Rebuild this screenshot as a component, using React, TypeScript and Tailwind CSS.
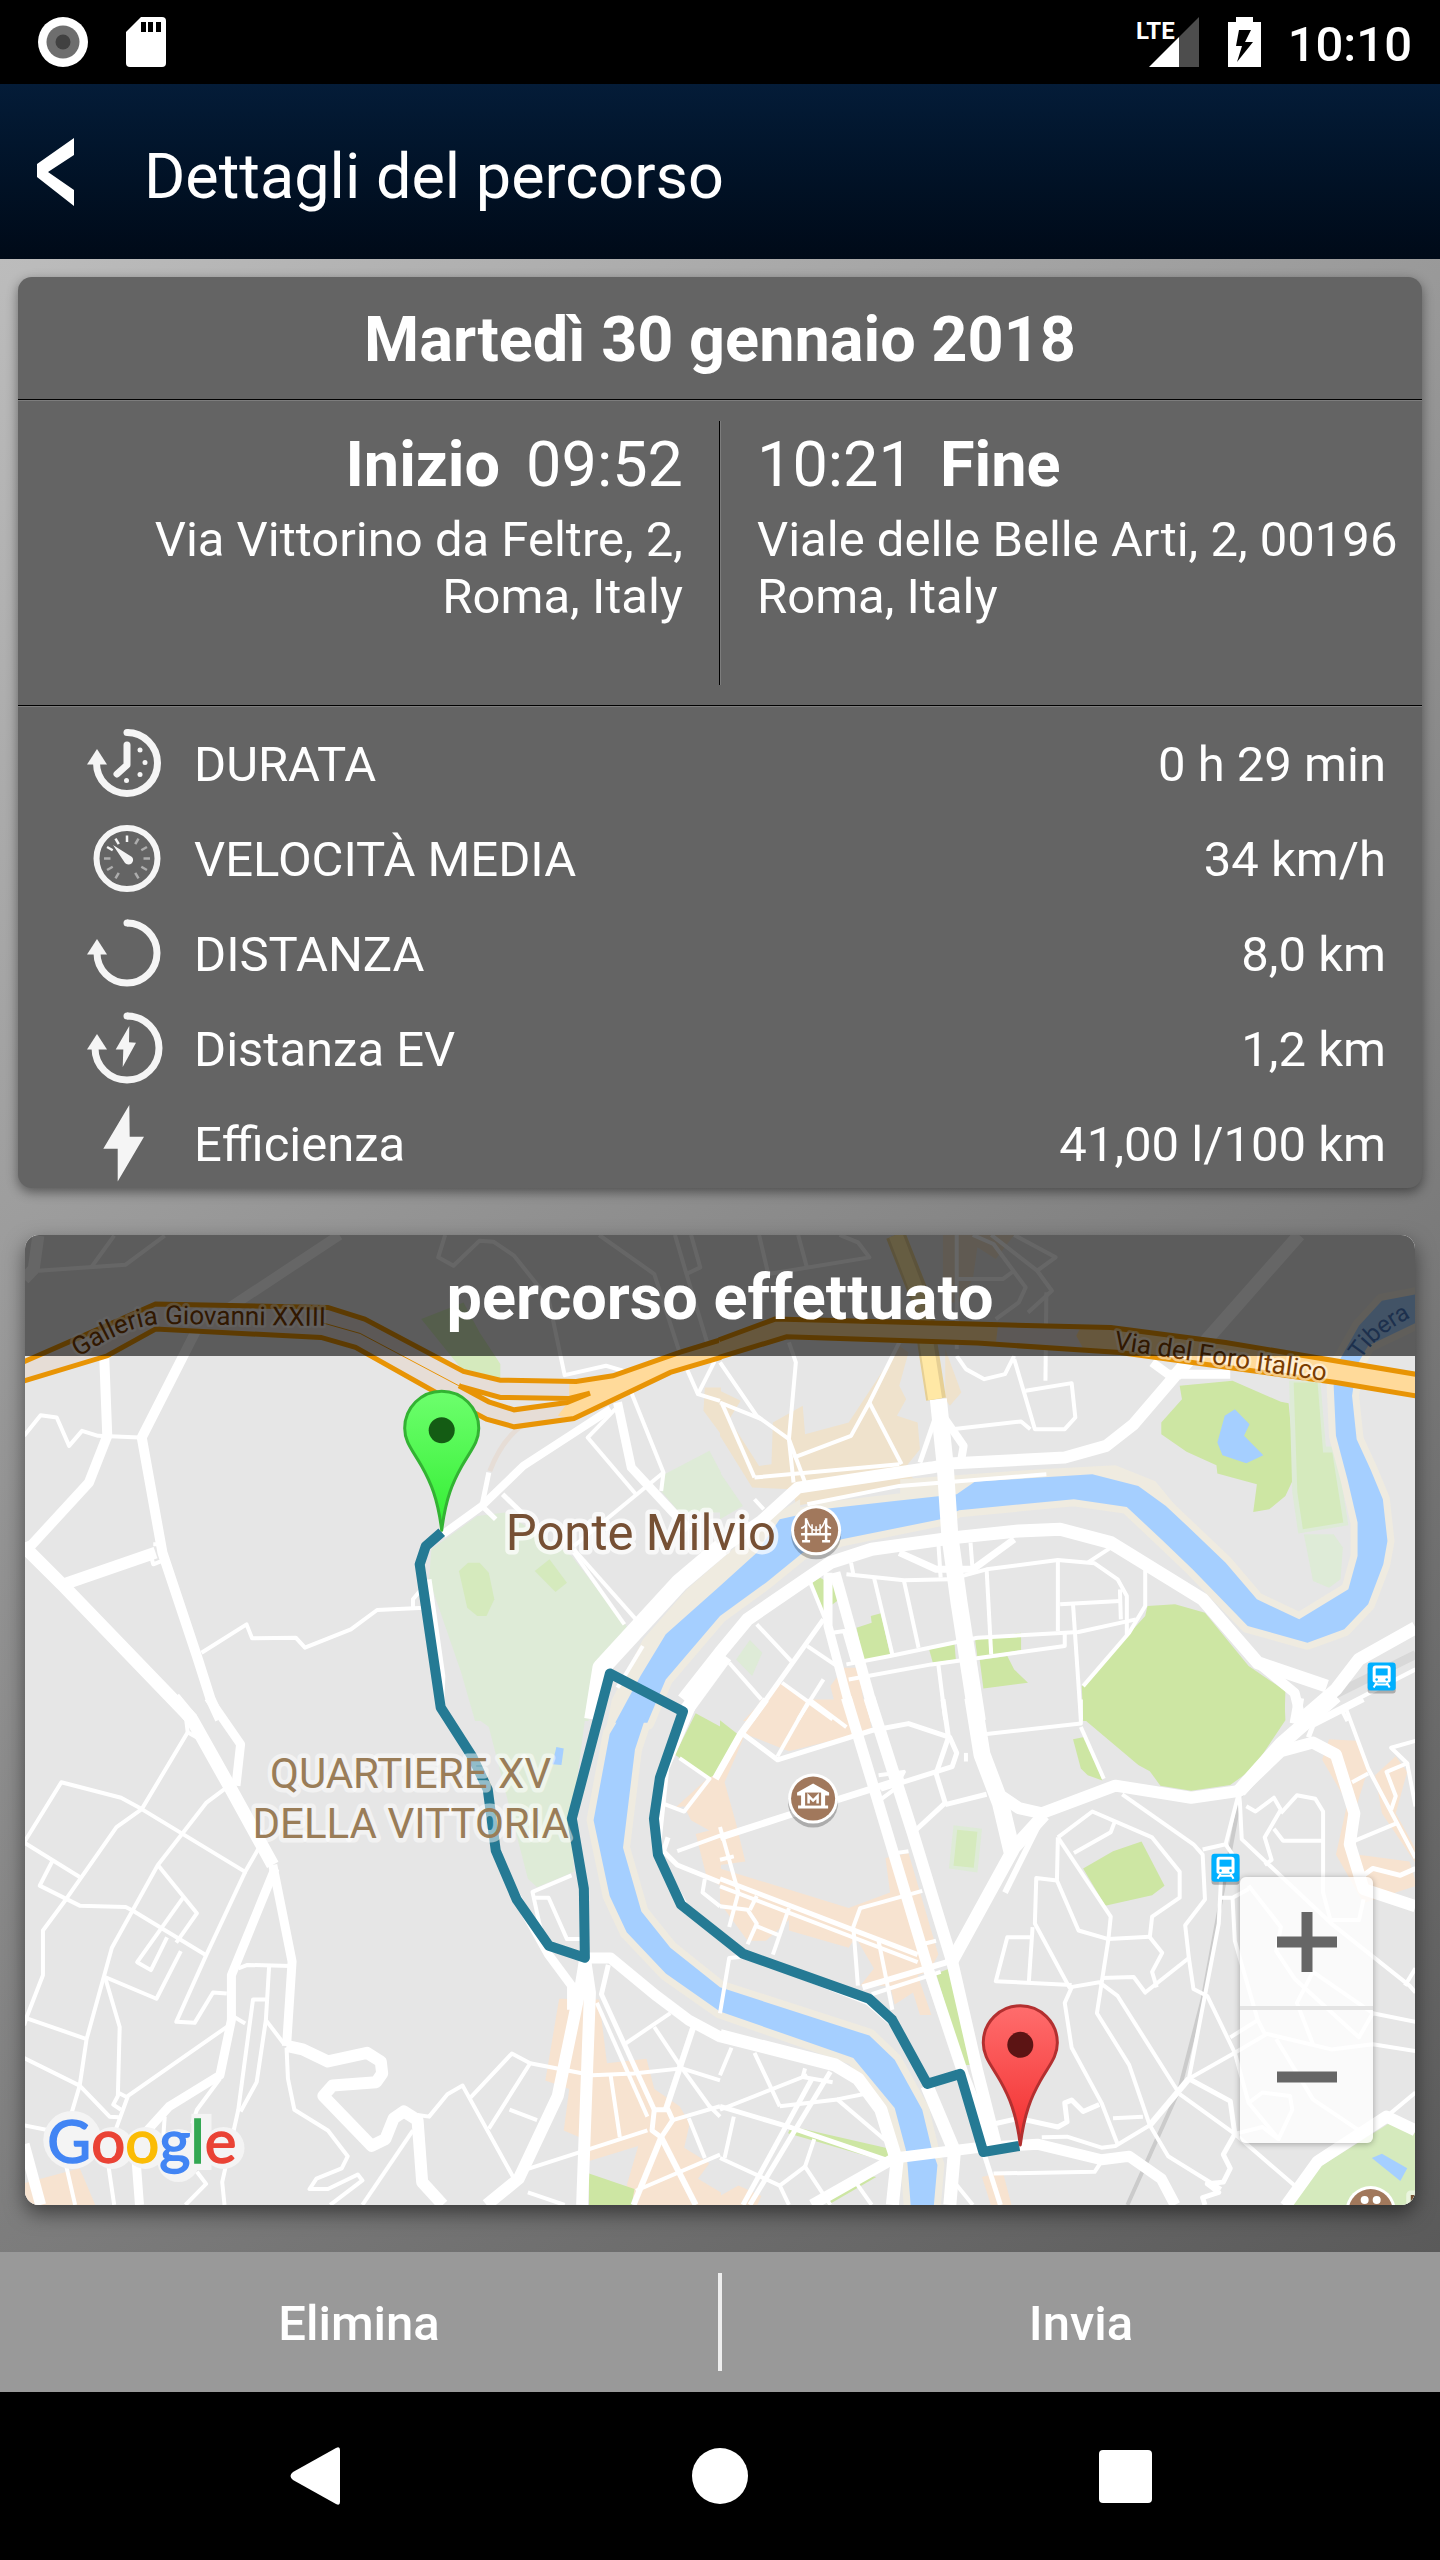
import type { ReactNode } from 'react';

type Street = [points: string, width?: number];
type Area = [points: string, color: string];

interface Tile {
  id: string;
  transform: string;
  areas: Area[];
  streets: Street[];
}

const PARK = '#cde6a3';
const MEADOW = '#d5eabd';
const GROVE = '#deebd7';
const PEACH = '#f7e3d0';
const TAN = '#efe2cc';
const WATER = '#a5cfff';
const BANK = '#efebe0';

const tiles: Tile[] = [
  {
    id: 'nw',
    transform: 'translate(0 1220) scale(.4592 .3333)',
    areas: [
      ['1040,890 940,990 935,1080 1005,1360 1035,1505 1282,1505 1285,1400 1370,1230 1245,1010 1100,880', GROVE],
      ['1440,770 1545,695 1570,760 1570,880 1480,880 1440,815', GROVE],
      ['918,300 1010,250 1045,340 1090,435 1090,485 1010,457', MEADOW],
      ['1000,1055 1020,1030 1045,1030 1065,1060 1077,1140 1060,1190 1040,1190 1018,1165', MEADOW],
      ['1197,1020 1235,1090 1210,1118 1165,1055', MEADOW],
      ['1535,505 1570,505 1570,645 1532,575', TAN],
    ],
    streets: [
      ['54,970 60,990 140,1100 420,1500', 13],
      ['228,400 235,650 195,790 65,985', 10],
      ['740,48 430,330 310,655 355,1000 430,1310 460,1440 480,1500', 10],
      ['140,1095 340,1000', 12],
      ['335,975 355,975 362,1020 335,1035 328,1000'],
      ['54,180 75,150 85,50', 12],
      ['54,650 90,588 125,595 152,680 180,635 215,650 305,655'],
      ['440,1300 538,1215 550,1257 645,1255 665,1285 765,1230 822,1172 925,1165'],
      ['915,1115 900,1140 900,1165'],
      ['85,155 275,137 360,50'],
      ['200,145 250,50'],
      ['970,48 955,115 988,140 1045,65 1075,68 1120,110 1195,240 1230,468 1320,440 1395,470'],
      ['1305,48 1425,165 1480,400 1520,525 1568,545'],
      ['1470,48 1495,165 1525,145 1505,48'],
      ['1495,165 1540,370 1555,430 1520,525'],
      ['965,945 1050,860 1140,740 1330,570', 8],
      ['1065,760 1050,860 1080,900', 5],
      ['1095,825 1140,885', 5],
      ['1250,1000 1360,1215'],
      ['1250,990 1385,1200'],
      ['1340,570 1280,655 1385,825'],
      ['1345,550 1375,745 1500,930', 9],
      ['1375,520 1445,760 1440,815'],
      ['1445,760 1250,980'],
      ['935,1080 965,1370 962,1480', 5],
      ['1400,1280 1345,1405'],
      ['1570,985 1480,1090 1310,1345 1292,1500', 18],
      ['1580,1310 1490,1480', 14],
    ],
  },
  {
    id: 'ne',
    transform: 'translate(720 1220) scale(.4592 .3333)',
    areas: [
      ['930,1160 990,1155 1055,1180 1150,1340 1230,1415 1228,1505 790,1505 787,1400 925,1190', PARK],
      ['1000,500 1115,485 1220,548 1237,552 1247,700 1247,780 1230,830 1195,870 1160,878 1168,795 1082,763 1080,738 1015,698 960,645 960,610 1005,540', PARK],
      ['1120,570 1152,615 1140,650 1182,708 1145,732 1093,708 1082,670 1098,590', WATER],
      ['1238,485 1306,485 1318,682 1340,682 1367,918 1258,943 1245,820', GROVE],
      ['1248,490 1300,490 1312,700 1332,700 1356,910 1268,930 1256,820', MEADOW],
      ['1270,945 1335,945 1355,985 1350,1080 1325,1105 1290,1085', GROVE],
      ['200,1090 218,1075 260,1110 260,1140 225,1175', PARK],
      ['297,1225 330,1210 328,1190 350,1182 370,1305 312,1325', PARK],
      ['455,1290 510,1270 513,1320 463,1330', PARK],
      ['555,1262 655,1240 655,1292 560,1315', PARK],
      ['565,1322 625,1310 640,1350 670,1390 573,1407', PARK],
      ['35,1320 65,1262 92,1300 70,1370', GROVE],
      ['0,760 50,860 0,900', GROVE],
      ['50,1505 130,1390 245,1505', PEACH],
      ['240,1400 270,1345 300,1345 320,1505 260,1505', PEACH],
      ['0,515 45,545 20,600 85,740 112,735 115,610 180,560 185,645 280,610 390,380 410,400 390,500 405,540 385,590 430,610 435,690 400,750 430,790 165,860 160,810 70,805 0,650', TAN],
      ['490,390 525,520 500,560 490,540', TAN],
      ['485,48 640,48 600,120 560,85 550,180 520,250 485,250', TAN],
    ],
    streets: [
      ['390,370 325,550 285,650 160,715'],
      ['325,550 395,735'],
      ['75,775 390,735'],
      ['5,555 75,775'],
      ['0,430 80,590 150,660 160,790'],
      ['150,370 165,430 150,660'],
      ['0,550 90,600'],
      ['150,660 185,790'],
      ['190,855 390,800 710,765'],
      ['515,410 535,450 575,480 620,465 640,410'],
      ['640,420 685,630 750,630 773,595 765,492 665,515'],
      ['505,630 655,607 675,630'],
      ['515,48 515,390'],
      ['550,48 595,75 665,205 650,250 600,300'],
      ['640,48 730,115 690,155'],
      ['590,48 690,155 722,215 670,280'],
      ['710,220 708,485'],
      ['85,48 105,165 325,115 300,70 260,48'],
      ['170,48 190,150'],
      ['515,180 615,180 640,155'],
      ['275,1065 400,1083 500,1080 580,1050 735,1022 815,1032 865,1080 885,1130 885,1250'],
      ['870,1110 872,1200'],
      ['735,1022 735,1235'],
      ['740,1155 870,1145'],
      ['768,1155 785,1500'],
      ['925,1050 925,1160 890,1240 790,1400'],
      ['580,1050 590,1305'],
      ['275,1335 370,1310 560,1255 780,1238 905,1200'],
      ['280,1380 460,1335 750,1280 750,1238'],
      ['335,1075 375,1305'],
      ['400,1083 432,1285'],
      ['475,1335 490,1500'],
      ['285,1030 290,1065'],
      ['390,1000 470,1050 550,1050 640,960', 7],
      ['545,970 550,1060'],
      ['475,970 480,1075'],
      ['850,985 800,1030'],
      ['195,1085 235,1220'],
      ['80,1215 155,1325'],
      ['225,1200 70,1500', 5],
      ['190,1280 265,1350'],
      ['135,1390 245,1500'],
      ['20,1330 90,1440'],
      ['225,1380 170,1500'],
      ['245,1240 270,1235 290,1330'],
      ['470,590 435,730', 5],
      ['490,600 530,680 525,720', 8],
      ['475,540 490,740 500,950 520,1150 560,1505', 17],
      ['235,1060 235,1220 290,1505', 9],
      ['250,1060 340,1505', 11],
      ['75,840 95,870'],
      ['-10,1000 90,905 170,805 460,745 510,732 750,715 840,680 900,615 990,470', 12],
      ['940,430 975,465 1110,465', 9],
      ['990,470 1060,360 1260,48', 13],
      ['-80,1440 0,1300 60,1200 240,1030 330,990 510,955 650,935 740,930 850,970 1050,1140 1170,1330 1320,1400', 13],
      ['1170,1330 1250,1420 1265,1505', 10],
      ['1513,1225 1390,1320 1340,1410 1260,1505', 13],
      ['1513,1350 1350,1465 1300,1500'],
      ['1350,1465 1365,1505'],
    ],
  },
  {
    id: 'sw',
    transform: 'translate(0 1700) scale(.4592 .3444)',
    areas: [
      ['1280,0 1245,350 1250,500 1170,545 1150,520 1065,80 1035,50 1023,0', GROVE],
      ['1218,868 1305,870 1322,1055 1408,1042 1425,1130 1480,1180 1502,1230 1490,1300 1545,1345 1520,1390 1570,1430 1570,1470 1390,1470 1365,1410 1390,1295 1280,1340 1280,1280 1228,1250 1240,1130 1188,1105', PEACH],
      ['50,1405 175,1360 210,1470 50,1470', PEACH],
      ['1283,1375 1382,1420 1375,1470 1283,1470', PARK],
      ['1470,160 1515,40 1570,80 1570,220 1545,228', PARK],
      ['1470,315 1540,230 1570,210 1570,540 1540,520 1515,390 1545,380 1505,350 1490,310', PEACH],
      ['1212,138 1228,142 1223,190 1203,188', WATER],
    ],
    streets: [
      ['54,415 135,240 265,285 310,318 535,500 565,430'],
      ['410,95 310,318 255,370 145,580 95,670 95,800 60,920 54,945'],
      ['405,40 410,95 430,110'],
      ['54,415 175,515'],
      ['115,470 88,540 175,598 275,602 290,612 450,742'],
      ['495,255 450,300 345,480 290,612 245,720 190,985 175,1120 155,1210'],
      ['345,480 430,620 385,705'],
      ['400,575 300,762 330,785 365,690'],
      ['535,500 450,742 385,935 425,938 465,850 495,853'],
      ['230,805 342,868 395,730'],
      ['230,805 262,950 258,1150 248,1175 265,1190'],
      ['60,925 190,985'],
      ['54,1040 175,1120 240,1210 260,1212'],
      ['500,945 280,1150 250,1260 235,1330 250,1466'],
      ['258,1140 280,1155'],
      ['520,780 540,770 635,773'],
      ['587,775 580,930 620,1000'],
      ['580,870 552,870 520,1190 485,1400 490,1466'],
      ['510,920 535,940'],
      ['580,930 560,1110 525,1195'],
      ['625,1010 628,1100 642,1190 715,1250 758,1325 745,1360 690,1390 675,1420 715,1420 780,1378 790,1395 720,1466'],
      ['900,1250 790,1466'],
      ['910,1205 935,1210 975,1145 1008,1120 1120,1390'],
      ['1025,1155 1115,1027 1155,1055 1065,1245'],
      ['1110,1190 1170,1220'],
      ['1155,1055 1290,1090 1380,1085 1485,1070 1568,1105'],
      ['1330,1090 1350,1270'],
      ['1245,510 1160,558 1175,650 1195,740'],
      ['1165,575 1195,575 1235,695 1265,695'],
      ['1325,770 1310,855 1425,1190', 5],
      ['1300,880 1410,1210'],
      ['1460,910 1360,1000'],
      ['1425,950 1480,1060 1545,1180 1568,1210'],
      ['1510,950 1450,1190', 6],
      ['1425,1190 1455,1190 1465,1220 1440,1270 1420,1250 1425,1190', 5],
      ['1440,1270 1380,1466', 6],
      ['1440,1270 1515,1466', 6],
      ['1410,1250 1130,1370'],
      ['1465,1220 1568,1180'],
      ['1385,1425 1568,1320'],
      ['1500,1215 1535,1330'],
      ['480,1100 430,1190 420,1230'],
      ['360,1210 355,1300'],
      ['54,1235 110,1250'],
      ['140,1320 165,1466'],
      ['1150,1430 1230,1466'],
      ['430,1370 450,1405 405,1466'],
      ['1455,400 1445,440 1475,480 1568,530', 5],
      ['1440,300 1490,325 1545,230 1480,170'],
      ['1475,440 1568,395'],
      ['1535,520 1530,560 1568,600'],
      ['54,1290 90,1466', 11],
      ['380,-5 420,60 500,250 595,480', 13],
      ['455,-5 525,130 515,250', 9],
      ['595,480 637,760 625,1005', 9],
      ['600,490 505,800 505,930 480,1090 370,1180 295,1290 305,1466', 9],
      ['625,1005 660,1015 715,1050 800,1025 830,1050 833,1085 820,1110 725,1120 705,1150 810,1295 840,1275 858,1215 880,1195 910,1220 920,1400 965,1466', 12],
      ['1120,560 1195,740 1245,830 1245,900', 9],
      ['1275,750 1265,830 1215,1150 1130,1390 1060,1466', 12],
      ['1275,760 1285,850 1268,1466', 12],
      ['1275,750 1330,750 1430,860 1500,930 1570,980', 11],
      ['1515,0 1450,200 1430,450 1500,620', 7],
    ],
  },
  {
    id: 'se',
    transform: 'translate(720 1700) scale(.4592 .3444)',
    areas: [
      ['790,0 1228,0 1230,60 1160,200 1110,248 1025,265 958,250 935,208 910,190 790,55', PARK],
      ['90,0 320,0 330,90 150,150 55,100 10,240 35,360 55,470 0,480 0,200', PEACH],
      ['0,490 280,605 370,560 360,460 410,445 475,740 455,790 430,800 460,915 435,915 420,850 380,885 370,830 305,830 335,780 295,690 280,720 150,670 150,640 100,700 60,700 0,590', PEACH],
      ['1325,115 1385,120 1410,200 1380,330 1385,450 1500,470 1516,540 1400,590 1340,450 1365,300 1310,175', PEACH],
      ['1470,165 1495,210 1470,330 1516,440 1516,480 1440,330 1425,220', PEACH],
      ['570,1385 615,1370 635,1470 590,1470', PEACH],
      ['0,1440 40,1410 90,1440 80,1470 0,1470', PEACH],
      ['470,795 500,780 550,1060 530,1060', PARK],
      ['550,1160 568,1160 590,1280 580,1290', PARK],
      ['155,1238 360,1300 370,1320 360,1340 148,1258', PARK],
      ['230,1456 320,1380 340,1385 235,1466', PARK],
      ['0,60 38,100 0,190', PARK],
      ['768,115 795,108 832,235 800,220 785,200', PARK],
      ['790,490 855,440 917,412 967,540 940,568 838,598', PARK],
      ['508,365 570,375 560,502 498,490', GROVE],
      ['516,378 560,384 552,488 508,482', MEADOW],
      ['1245,1470 1300,1360 1455,1230 1516,1260 1516,1470', MEADOW],
      ['1418,1330 1440,1318 1495,1360 1480,1397', WATER],
    ],
    streets: [
      ['0,400 150,335 400,230', 7],
      ['45,95 125,175 330,90 410,70 500,110 515,155 505,195 350,260', 5],
      ['485,0 497,110 470,215 490,300 425,380', 5],
      ['490,305 580,275', 5],
      ['580,100 785,70 785,0'],
      ['785,80 835,230'],
      ['-10,230 45,100 100,0', 7],
      ['195,0 275,80'],
      ['195,0 125,165'],
      ['0,520 430,740', 5],
      ['0,542 430,762'],
      ['440,555 305,605 290,660 300,830'],
      ['345,700 375,900'],
      ['310,835 500,760', 6],
      ['330,855 480,790'],
      ['440,710 470,700'],
      ['385,445 410,440'],
      ['345,220 400,210 380,260 350,290'],
      ['535,155 535,180'],
      ['0,600 60,610 80,650 60,710'],
      ['80,570 65,610'],
      ['150,605 115,740'],
      ['75,655 130,685'],
      ['0,370 40,560 20,660'],
      ['0,465 30,455'],
      ['735,400 810,325 940,400 1000,500 1000,575 940,630 935,690 962,735 940,790 950,835'],
      ['860,350 850,385 770,445'],
      ['735,400 850,630 845,695 820,910 890,1060 935,1235'],
      ['735,400 733,525 688,518 685,650 760,835 825,820 865,860 1000,1145'],
      ['733,525 780,670 845,695 935,688'],
      ['680,690 625,690 600,817 765,828'],
      ['680,660 672,817'],
      ['765,835 750,880 765,1010 830,1170 865,1290'],
      ['830,808 900,805 925,850 1020,750 1012,655 1055,580 1050,450 1030,420 875,275'],
      ['1020,750 1030,840 1060,860 1120,1025'],
      ['1130,265 1100,420 1050,435'],
      ['1100,420 1115,450'],
      ['1130,270 1135,405 1330,650 1500,830 1513,850'],
      ['1490,830 1513,780'],
      ['1090,520 1085,650 1020,1100 935,1235 860,1295 830,1300 755,1268 700,1270'],
      ['1115,575 1120,700 1170,930 1110,980'],
      ['1170,930 1185,970'],
      ['1090,575 1115,575 1150,550'],
      ['1150,540 1220,660 1210,730 1250,810 1390,980 1420,910 1513,935'],
      ['1320,640 1390,640 1400,580'],
      ['1145,310 1165,325 1205,285 1220,320 1185,400 1200,465 1185,480'],
      ['1220,330 1255,278 1295,288 1312,325 1312,560 1330,650'],
      ['1205,375 1225,410 1312,410'],
      ['1020,1100 1110,1165 1120,1260 1095,1320 1110,1360 1095,1400 1060,1405 1085,1430 1050,1445 1055,1466', 5],
      ['1020,1100 1120,1025 1190,970 1330,1015 1420,1000 1513,1020'],
      ['1120,1025 1150,1170 1180,1140 1240,1150 1245,1190 1215,1275 1150,1170'],
      ['1000,1145 1120,1260 1250,1410'],
      ['935,1235 975,1325 1090,1420'],
      ['1020,1100 935,1235', 6],
      ['855,1215 920,1210'],
      ['600,1230 650,1215 735,1240 755,1225 750,1170 765,1162 790,1195 825,1175', 5],
      ['1290,1000 1255,880 1290,790 1420,910'],
      ['1210,985 1290,1160 1390,1250'],
      ['1120,1260 1180,1240 1215,1275'],
      ['1513,1140 1450,1210'],
      ['1360,20 1410,200 1513,460'],
      ['1513,120 1460,140 1495,185 1450,210 1470,280 1460,320'],
      ['1495,185 1513,310'],
      ['1410,215 1375,240'],
      ['1380,410 1470,360'],
      ['1400,510 1420,490 1480,510 1513,490', 5],
      ['1280,110 1290,75 1400,0', 5],
      ['25,1010 0,1090'],
      ['75,1025 130,1180'],
      ['0,1190 190,1090'],
      ['185,1070 180,1095 245,1110'],
      ['200,1100 50,1466', 5],
      ['240,1080 65,1466', 5],
      ['0,1180 150,1240 370,1340', 5],
      ['130,1180 255,1160 370,1290'],
      ['255,1160 330,1140'],
      ['0,1330 130,1410 150,1466'],
      ['130,1410 185,1355 240,1466'],
      ['30,1210 10,1330'],
      ['185,1355 205,1275'],
      ['295,1400 330,1466'],
      ['595,1375 815,1370 830,1340'],
      ['575,1320 610,1466', 5],
      ['510,1400 550,1466'],
      ['700,345 620,560', 6],
      ['550,-5 570,160 610,300 635,440', 17],
      ['705,335 640,430 500,770', 13],
      ['600,270 650,315 700,330 860,250 1025,285 1130,265 1220,150 1290,125 1340,160 1380,330 1370,420 1400,550 1513,600', 12],
      ['1340,-10 1220,130 1130,265', 14],
      ['1260,-5 1250,70', 10],
      ['275,-5 340,280 455,790 530,1090 590,1290', 11],
      ['325,-5 420,390 505,760 560,1080 600,1290', 12],
      ['450,1120 510,1310 500,1466', 13],
      ['0,910 20,750 60,745 320,880 380,950'],
      ['0,975 250,1060 300,1100 350,1190 385,1340 375,1466', 13],
      ['200,1466 380,1330 560,1300 690,1290 830,1335 890,1325 960,1390 990,1466', 11],
      ['1230,1470 1300,1340 1450,1210 1513,1250', 12],
    ],
  },
];

const upperRiver =
  '1516,225 1440,245 1390,320 1345,430 1335,500 1340,650 1365,780 1387,910 1387,1010 1367,1110 1260,1200 1168,1140 1100,1030 1028,935 970,860 910,800 810,765 555,787 515,825 380,845 235,868 130,900 80,1000 0,1100 -118,1245 -173,1370 -228,1510 -158,1510 -118,1380 0,1190 100,1090 180,1000 265,960 480,900 520,873 770,840 885,863 960,960 1028,1050 1148,1220 1278,1270 1358,1230 1410,1155 1443,1035 1452,965 1442,840 1415,750 1385,660 1375,530 1385,440 1410,380 1516,310';

const lowerRiver =
  '-193,-5 -240,100 -275,350 -240,570 -203,675 -118,795 0,905 290,1040 380,1185 405,1310 408,1350 415,1470 465,1470 473,1350 460,1300 440,1190 380,1045 325,975 0,835 -108,720 -171,615 -211,430 -185,145 -148,-5';

const route =
  '442,1533 426,1547 420,1565 441,1708 473,1758 488,1790 496,1851 517,1900 549,1946 585,1958 584,1889 572,1819 610,1674 683,1712 660,1778 654,1819 658,1855 681,1905 743,1954 869,1999 892,2020 927,2084 960,2074 983,2152 1019,2146';

const Pin = ({ x, y, fill, stroke, hole }: { x: number; y: number; fill: string; stroke: string; hole: string }) => (
  <g transform={`translate(${x} ${y})`}>
    <path
      d="M0 -2C-4 -34 -11 -50 -20 -66C-29 -82 -37 -90 -37 -104A37 37 0 0 1 37 -104C37 -90 29 -82 20 -66C11 -50 4 -34 0 -2Z"
      fill={fill}
      stroke={stroke}
      strokeWidth={3}
      strokeLinejoin="round"
    />
    <circle cy={-102} r={13} fill={hole} />
  </g>
);

const Poi = ({ x, y, children }: { x: number; y: number; children: ReactNode }) => (
  <g transform={`translate(${x} ${y})`}>
    <circle cy={4} r={25} fill="#000" opacity={0.25} />
    <circle r={25} fill="#fff" />
    <circle r={22} fill="#a1785c" />
    {children}
  </g>
);

const TrainStop = ({ x, y }: { x: number; y: number }) => (
  <g transform={`translate(${x} ${y})`}>
    <rect y={3} width={28} height={28} rx={3} fill="#000" opacity={0.25} />
    <rect width={28} height={28} rx={3} fill="#00b0ff" />
    <path d="M8 3h12q3 0 3 3v12q0 2-3 2H8q-3 0-3-2V6q0-3 3-3Z" fill="#fff" />
    <path d="M8 6h12v7H8Z" fill="#00b0ff" />
    <circle cx={9} cy={17} r={1.3} fill="#00b0ff" />
    <circle cx={19} cy={17} r={1.3} fill="#00b0ff" />
    <path d="M9 20l-3 5M19 20l3 5M8 22h12" stroke="#fff" strokeWidth={2} />
  </g>
);

const GoogleMark = () => (
  <g>
    <g fill="#f4f4f4">
      <circle cx={73} cy={2140} r={29} />
      <circle cx={113} cy={2148} r={21} />
      <circle cx={146} cy={2148} r={21} />
      <circle cx={179} cy={2150} r={21} />
      <circle cx={179} cy={2161} r={21} />
      <rect x={192} y={2114} width={20} height={56} />
      <circle cx={224} cy={2148} r={21} />
    </g>
    <text x={48} y={2163} fontSize={60} fontFamily="Lato, Roboto, sans-serif" strokeWidth={1.5}>
      <tspan fill="#4285f4" stroke="#4285f4">G</tspan>
      <tspan fill="#ea4335" stroke="#ea4335">o</tspan>
      <tspan fill="#fbbc05" stroke="#fbbc05">o</tspan>
      <tspan fill="#4285f4" stroke="#4285f4">g</tspan>
      <tspan fill="#34a853" stroke="#34a853">l</tspan>
      <tspan fill="#ea4335" stroke="#ea4335">e</tspan>
    </text>
  </g>
);

const RouteMap = () => (
  <svg
    viewBox="25 1236 1390 969"
    preserveAspectRatio="xMidYMid slice"
    role="img"
    aria-label="Mappa del percorso"
    className="absolute inset-0 size-full"
  >
    <defs>
      <linearGradient id="pin-start" x1="0" y1="0" x2="0" y2="1">
        <stop offset="0" stopColor="#6dff6d" />
        <stop offset="1" stopColor="#33ee33" />
      </linearGradient>
      <linearGradient id="pin-end" x1="0" y1="0" x2="0" y2="1">
        <stop offset="0" stopColor="#ff6d6d" />
        <stop offset="1" stopColor="#f22e2e" />
      </linearGradient>
      <path id="galleria" d="M79 1358C104 1343 130 1326 164 1325L345 1327" />
      <path id="foro" d="M1113 1350L1340 1384" />
      <path id="tibera" d="M1360 1361C1372 1342 1388 1328 1425 1311" />
    </defs>

    <rect x={25} y={1236} width={1390} height={969} fill="#e6e6e6" />

    {tiles.map((tile) => (
      <g key={tile.id} transform={tile.transform}>
        {tile.areas.map(([points, color]) => (
          <polygon key={points} points={points} fill={color} />
        ))}
      </g>
    ))}

    {/* River */}
    <g fill={BANK}>
      <polygon points="800,1500 767,1520 687,1590 643,1640 612,1700 592,1800 600,1810 640,1700 700,1610 800,1540" />
      <polygon points="900,1480 1040,1470 1115,1466 1155,1482 1190,1525 1160,1530 1100,1480 900,1500" />
      <g stroke={BANK} strokeWidth={14} strokeLinejoin="round">
        <polygon transform={tiles[1].transform} points={upperRiver} vectorEffect="non-scaling-stroke" />
        <polygon transform={tiles[3].transform} points={lowerRiver} vectorEffect="non-scaling-stroke" />
      </g>
    </g>
    <g fill={WATER}>
      <polygon transform={tiles[1].transform} points={upperRiver} />
      <polygon transform={tiles[3].transform} points={lowerRiver} />
    </g>

    {/* Railway */}
    <g fill="none" stroke="#cbcbcb" strokeWidth={4}>
      <path d="M1240 1795L1202 2000L1179 2089L1127 2205" />
      <path d="M1415 1655L1330 1697" strokeWidth={9} stroke="#d8d8d8" />
    </g>

    {tiles.map((tile) => (
      <g key={tile.id} transform={tile.transform} fill="none" stroke="#fff" strokeLinejoin="round">
        {tile.streets.map(([points, width = 4]) => (
          <polyline key={points} points={points} strokeWidth={width} vectorEffect="non-scaling-stroke" />
        ))}
      </g>
    ))}

    {/* Ring road */}
    <g transform={tiles[1].transform} fill="none">
      <path d="M382 48L440 250L452 380L470 540" stroke="#e6cf94" strokeWidth={20} vectorEffect="non-scaling-stroke" />
      <path d="M382 48L438 250L450 380L468 540" stroke="#ffe8a5" strokeWidth={14} vectorEffect="non-scaling-stroke" />
    </g>
    <path d="M524 1425Q502 1440 490 1472" fill="none" stroke="#e6ddd6" strokeWidth={5} />
    <g transform={tiles[0].transform}>
      <path
        d="M50 430L340 255L715 265L795 300L1010 457L1090 483L1255 487L1240 540L1120 572L1060 545L1000 500L1060 545L1120 572L1240 550L1225 603L1120 623L1060 600L950 520L775 385L700 355L340 330L235 410L50 487Z"
        fill="#e6ddd6"
      />
      <path d="M1240 487L1335 470L1570 362V415L1460 460L1250 598L1215 590L1240 545Z" fill="#ffda9a" />
      <path d="M1035 520L1090 535L1240 541L1120 572L1070 548Z" fill="#e6e6e6" />
      <g fill="none" stroke="#e89405" strokeWidth={5}>
        <path d="M50 430L340 255L715 265L795 300L1010 457L1090 483L1255 487L1335 470L1480 400L1570 362" vectorEffect="non-scaling-stroke" />
        <path d="M50 487L235 410L340 330L700 355L775 385L950 520L1060 600L1120 623L1250 598L1460 460L1570 415" vectorEffect="non-scaling-stroke" />
        <path d="M1000 500L1090 535L1240 538L1285 522L1235 550L1120 572L1065 548L1000 500" vectorEffect="non-scaling-stroke" />
        <path d="M700 310L785 343L1000 500" strokeWidth={1} vectorEffect="non-scaling-stroke" />
      </g>
    </g>
    <g transform={tiles[1].transform}>
      <path d="M-2 360L120 300L550 315L850 325L1100 370L1516 465V531L1340 490L870 400L560 372L145 353L-2 415Z" fill="#ffda9a" />
      <path d="M605 317L785 323L775 350L790 388L600 374Z" fill="#e6ddd6" />
      <g fill="none" stroke="#e89405" strokeWidth={5}>
        <path d="M-2 362L120 300L550 315L850 325L1100 370L1516 466" vectorEffect="non-scaling-stroke" />
        <path d="M-2 415L145 353L560 372L870 400L1340 490L1516 531" vectorEffect="non-scaling-stroke" />
      </g>
    </g>

    {/* Route and map labels */}
    <polyline points={route} fill="none" stroke="#257a94" strokeWidth={10} strokeLinejoin="round" />

    <g paintOrder="stroke" strokeLinejoin="round" strokeOpacity={0.5} stroke="#fff" strokeWidth={9}>
      <g fontSize={42} fill="#9a7d58" textAnchor="middle">
        <text x={411} y={1788}>QUARTIERE XV</text>
        <text x={411} y={1838}>DELLA VITTORIA</text>
      </g>
      <g fontSize={26} fill="#7a3c00" strokeWidth={5}>
        <text><textPath href="#galleria">Galleria Giovanni XXIII</textPath></text>
        <text><textPath href="#foro">Via del Foro Italico</textPath></text>
        <text fontSize={24} fill="#4a78c0" stroke="none"><textPath href="#tibera">Tibera</textPath></text>
      </g>
      <text x={506} y={1551} fontSize={49} fill="#765034" strokeOpacity={0.7}>Ponte Milvio</text>
      <text x={1406} y={2231} fontSize={49} fill="#765034">F</text>
    </g>

    <Poi x={816} y={1531}>
      <g fill="none" stroke="#fff" strokeWidth={2.5}>
        <path d="M-10 -12V12M10 -12V12M-15 4H15M-14 11H-6M6 11H14" />
        <path d="M-15 -2Q-10 -3 -9 -10Q-6 0 0 0Q6 0 9 -10Q10 -3 15 -2M-4 -6V3M0 -4V3M4 -6V3" strokeWidth={1.5} />
      </g>
    </Poi>
    <Poi x={813} y={1799}>
      <path d="M0 -15L16 -6V-3H12V7H15V10H-15V7H-12V-3H-16V-6Z" fill="#fff" />
      <rect x={-8} y={-6} width={16} height={13} fill="#a1785c" />
      <path d="M-4.5 5V-2.5L0 2L4.5 -2.5V5" fill="none" stroke="#fff" strokeWidth={2.5} />
    </Poi>
    <Poi x={1370} y={2211}>
      <circle cx={-6} cy={-11} r={4} fill="#fff" />
      <circle cx={6} cy={-11} r={4} fill="#fff" />
    </Poi>
    <TrainStop x={1367} y={1663} />
    <TrainStop x={1211} y={1854} />

    <Pin x={442} y={1533} fill="url(#pin-start)" stroke="#33b333" hole="#145c14" />
    <Pin x={1020} y={2147} fill="url(#pin-end)" stroke="#b33030" hole="#5c1414" />

    <GoogleMark />
  </svg>
);

const StatIcon = ({ children }: { children: ReactNode }) => (
  <svg viewBox="0 0 80 80" className="size-20 shrink-0 overflow-visible" fill="#f5f5f5" stroke="none" aria-hidden="true">
    {children}
  </svg>
);

const TripRing = ({ r = 30.5 }: { r?: number }) => (
  <>
    <path
      d={`M43 ${38 - r}A${r} ${r} 0 1 1 ${43 - r} 38`}
      fill="none"
      stroke="#f5f5f5"
      strokeWidth={7}
    />
    <circle cx={43} cy={38 - r} r={3.5} />
    <path d="M13 24L3 39.5H23Z" />
  </>
);

const gaugeTicks = [-150, -120, -90, -60, -30, 0, 30, 60, 90, 120, 150];

const stats = [
  {
    label: 'DURATA',
    value: '0 h 29 min',
    icon: (
      <StatIcon>
        <TripRing />
        <path d="M43 20V40L33 49" fill="none" stroke="#f5f5f5" strokeWidth={7} strokeLinecap="round" strokeLinejoin="round" />
        <circle cx={56} cy={25} r={2.5} />
        <circle cx={61} cy={37.5} r={2.5} />
        <circle cx={56} cy={49.5} r={2.5} />
        <circle cx={42.5} cy={55.5} r={2.5} />
      </StatIcon>
    ),
  },
  {
    label: 'VELOCITÀ MEDIA',
    value: '34 km/h',
    icon: (
      <StatIcon>
        <circle cx={43} cy={38.5} r={30.5} fill="none" stroke="#f5f5f5" strokeWidth={6} />
        {gaugeTicks.map((angle) => (
          <path
            key={angle}
            d="M43 15.5V22"
            stroke="#f5f5f5"
            strokeWidth={2.5}
            opacity={angle >= -60 && angle <= 0 ? 1 : 0.5}
            transform={`rotate(${angle} 43 38.5)`}
          />
        ))}
        <path d="M29 25L48 37A4.5 4.5 0 0 1 41 43Z" />
      </StatIcon>
    ),
  },
  {
    label: 'DISTANZA',
    value: '8,0 km',
    icon: (
      <StatIcon>
        <TripRing r={30} />
      </StatIcon>
    ),
  },
  {
    label: 'Distanza EV',
    value: '1,2 km',
    icon: (
      <StatIcon>
        <TripRing r={32} />
        <path d="M45.3 16L31.7 39.5H39.3L38.7 57L52 32.8L45 32.2Z" />
      </StatIcon>
    ),
  },
  {
    label: 'Efficienza',
    value: '41,00 l/100 km',
    icon: (
      <StatIcon>
        <path d="M45.3 0L19.3 43.8H33.7V76.5L60 31.8H45.7Z" />
      </StatIcon>
    ),
  },
];

const StatusBar = () => (
  <div className="flex h-[84px] items-center justify-between bg-black pr-7 pl-[38px]">
    <div className="flex items-center gap-[38px]">
      <svg viewBox="0 0 50 50" className="size-[50px]" aria-hidden="true">
        <circle cx={25} cy={25} r={25} fill="#fff" />
        <circle cx={25} cy={25} r={16.5} fill="#6e6e6e" />
        <circle cx={25} cy={25} r={7.5} fill="#414141" />
      </svg>
      <svg viewBox="0 0 40 50" className="h-[50px] w-10" aria-hidden="true">
        <path d="M15 0H36Q40 0 40 4V46Q40 50 36 50H4Q0 50 0 46V15Z" fill="#fff" />
        <path d="M15 5H20V15H15ZM22 5H27V15H22ZM30 5H35V15H30Z" fill="#000" />
      </svg>
    </div>
    <div className="flex items-center">
      <svg viewBox="0 0 64 52" className="mr-[29px] h-[52px] w-16" aria-label="LTE">
        <path d="M64 1V51H44V21Z" fill="#4d4d4d" />
        <path d="M44 21V51H14Z" fill="#fff" />
        <text x={1} y={23} fontSize={24} fontWeight={700} fontFamily="'Liberation Sans Narrow', Roboto, sans-serif" fill="#fff">
          LTE
        </text>
      </svg>
      <svg viewBox="0 0 33 52" className="mr-[27px] h-[52px] w-[33px]" aria-hidden="true">
        <path d="M8 1H25V6H33V51H0V6H8Z" fill="#fff" />
        <path d="M11 14H23L17 26H25L9 46L14 30H8Z" fill="#000" />
      </svg>
      <span className="pt-1 text-[49px] leading-none font-medium">10:10</span>
    </div>
  </div>
);

const App = () => (
  <div className="flex min-h-screen flex-col bg-black font-['Roboto',sans-serif] text-white">
    <StatusBar />

    <header className="flex h-[175px] items-center bg-linear-to-b from-[#041c38] to-[#000a18] pl-[37px]">
      <button type="button" aria-label="Indietro" className="mr-[70px]">
        <svg viewBox="0 0 37 68" className="h-[68px] w-[37px]" aria-hidden="true">
          <path d="M37 0V17L11 34L37 52V68L0 39V26Z" fill="#fff" />
        </svg>
      </button>
      <h1 className="pt-[10px] text-[63px] leading-[74px]">Dettagli del percorso</h1>
    </header>

    <main className="flex flex-1 flex-col gap-[47px] bg-[linear-gradient(143deg,#bcbcbc,#5a5a5a)] pt-[18px] pb-[47px]">
      {/* Trip summary */}
      <section className="mx-[18px] overflow-hidden rounded-[14px] bg-[#646464] shadow-[0_4px_12px_rgba(0,0,0,0.45)]">
        <h2 className="border-b border-black pt-[26px] pb-[22px] text-center text-[63px] leading-[74px] font-bold">
          Martedì 30 gennaio 2018
        </h2>

        <div className="flex border-t border-b border-t-[#7d7d7d] border-b-black py-5">
          <div className="h-[264px] w-1/2 border-r border-black pt-[6px] pr-9 pl-5 text-right">
            <p className="text-[63px] leading-[76px]">
              <b className="mr-[26px]">Inizio</b>
              <time>09:52</time>
            </p>
            <p className="pt-2 pl-20 text-[49px] leading-[57px]">Via Vittorino da Feltre, 2, Roma, Italy</p>
          </div>
          <div className="h-[264px] w-1/2 border-l border-[#7d7d7d] pt-[6px] pr-3 pl-9">
            <p className="text-[63px] leading-[76px]">
              <time className="mr-[26px]">10:21</time>
              <b>Fine</b>
            </p>
            <p className="pt-2 text-[49px] leading-[57px]">Viale delle Belle Arti, 2, 00196 Roma, Italy</p>
          </div>
        </div>

        <dl className="-mb-1 border-t border-[#7d7d7d] pt-[10px]">
          {stats.map((stat) => (
            <div key={stat.label} className="flex h-[95px] items-center pr-9 pl-[66px] text-[49px] leading-[57px]">
              {stat.icon}
              <dt className="ml-[30px] flex-1">{stat.label}</dt>
              <dd>{stat.value}</dd>
            </div>
          ))}
        </dl>
      </section>

      {/* Map */}
      <section className="relative mx-[25px] min-h-[600px] flex-1 overflow-hidden rounded-[14px] bg-[#e6e6e6] shadow-[0_8px_20px_rgba(0,0,0,0.5)]">
        <RouteMap />
        <h2 className="relative bg-black/60 pt-[26px] pb-[21px] text-center text-[63px] leading-[74px] font-bold">
          percorso effettuato
        </h2>
        <div className="absolute right-[42px] bottom-[62px] flex w-[133px] flex-col divide-y-4 divide-[#e4e4e4] rounded-md bg-white/80 text-[#666] shadow-[0_1px_6px_rgba(0,0,0,0.3)]">
          <button type="button" aria-label="Ingrandisci" className="flex h-[133px] items-center justify-center">
            <svg viewBox="0 0 60 60" className="size-[60px]" aria-hidden="true">
              <path d="M0 30H60M30 0V60" stroke="currentColor" strokeWidth={11} />
            </svg>
          </button>
          <button type="button" aria-label="Riduci" className="flex h-[133px] items-center justify-center">
            <svg viewBox="0 0 60 60" className="size-[60px]" aria-hidden="true">
              <path d="M0 30H60" stroke="currentColor" strokeWidth={11} />
            </svg>
          </button>
        </div>
      </section>
    </main>

    <div className="flex h-[140px] items-center bg-[#999] text-[49px] font-medium">
      <button type="button" className="h-full flex-1 pt-1">Elimina</button>
      <span className="h-[98px] w-1 bg-[#eee]" />
      <button type="button" className="h-full flex-1 pt-1">Invia</button>
    </div>

    <nav className="flex h-[168px] items-center justify-center bg-black">
      <button type="button" aria-label="Indietro" className="flex w-[405px] justify-center">
        <svg viewBox="0 0 50 58" className="h-[58px] w-[50px]" aria-hidden="true">
          <path d="M46 1Q50 -1 50 3V55Q50 59 46 57L3 33Q-2 29 3 25Z" fill="#fff" />
        </svg>
      </button>
      <button type="button" aria-label="Home" className="flex w-[405px] justify-center">
        <span className="size-14 rounded-full bg-white" />
      </button>
      <button type="button" aria-label="Recenti" className="flex w-[405px] justify-center">
        <span className="size-[53px] rounded-[4px] bg-white" />
      </button>
    </nav>
  </div>
);

export default App;
